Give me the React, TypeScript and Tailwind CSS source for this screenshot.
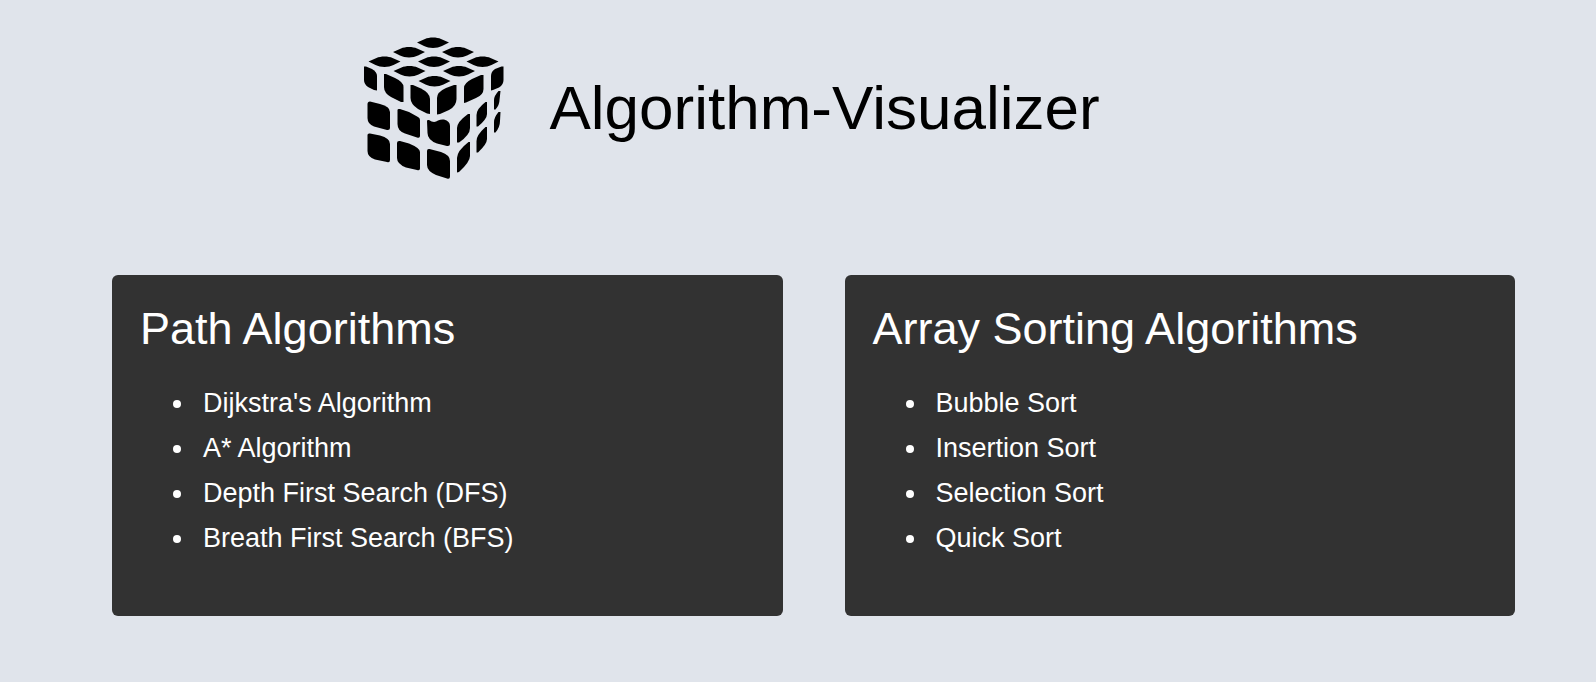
const topTiles: [number, number][] = [
  [78, 12.5], [54, 22], [103, 22], [29.5, 31.5], [79, 31.5], [127.5, 31.5], [54.5, 41], [104, 41], [79.5, 51],
];

const sideTiles = [
  "M9 36.5 L11 36.5 L17 39 Q22 42 22 46 V60.5 L19 60 L13 57 Q9 54 9 50 Z",
  "M29 44 H31 L40 48 Q48.5 52 48.5 57 V72 L46 72 L36 67 Q29 63 29 57 Z",
  "M55.5 55 H58 L66 58.5 Q75 63 75 69 V84 L72 83.5 L63 79 Q55.5 74 55.5 68 Z",
  "M101.5 55 H99 L91 58 Q82 62 82 68 V84.5 L85 84 L94 80 Q101.5 76 101.5 69 Z",
  "M128.5 45 H126 L117 49 Q109 53 109 58 V73 L111 72.5 L121 68 Q128.5 65 128.5 59 Z",
  "M148.5 36.5 H146.5 L140 39 Q136 41.5 136 46 V60.5 L138 60 L144 57.5 Q148.5 55 148.5 50 Z",
  "M12.5 74 Q12.5 71.5 15 71.5 L25 74 Q35 76.5 35 82 V98 Q35 100.5 32 100 L19 96.5 Q12.5 94 12.5 88 Z",
  "M42.5 80 Q42.5 78.5 45 79 L54 82 L63 87 Q65 88 65 90 V106 Q65 108.5 62 107.5 L50 103.5 Q42.5 101 42.5 94 Z",
  "M72 91 Q72 89.5 74 90 Q79 93.5 83 90.5 Q86 89 89 89.5 Q95 91 95 96 V114 Q95 116.5 92 116 L82 113.5 Q72.5 110 72.5 103 Z",
  "M115 84 L113 84 Q102 92 102 98 V112.5 L104 112.5 Q115 105 115 98 Z",
  "M132 72 H130.5 Q121.5 79 121.5 85 V96.5 H123 Q132 89 132 84 Z",
  "M145.5 61 H143.5 Q139 66 139 70 V79.5 H140.5 Q144.5 75 144.5 70 Z",
  "M12.5 105 Q12.5 103 15 103.5 L25 105.5 Q35 108 35 114 V130 Q35 133 32 132 L20 129.5 Q12.5 127 12.5 121 Z",
  "M42 113 Q42 110.5 45 111 L54 113.5 Q65 118 65 122 V138.5 Q65 141 62 140 L51 137.5 Q42 134 42 128 Z",
  "M72 121 Q72 118.5 74.5 119 L86 122 Q95 125 95 131 V146.5 Q95 149.5 92 148.5 L81 145 Q72 141 72 135 Z",
  "M115 112 H113.5 Q102 121 102 128 V142.5 L104 142 Q115 132 115 126 Z",
  "M132 97 H130.5 Q121.5 105 121.5 111 V122.5 H123 Q132 114 132 109 Z",
  "M145.5 82 H143.5 Q139 87.5 139 92 V102.5 H140.5 Q145 97 145 91 Z",
];

function CubeLogo() {
  return (
    <svg viewBox="0 2 160 152" className="h-[152px] w-40 shrink-0" aria-hidden="true">
      {topTiles.map(([x, y]) => (
        <path
          key={`${x}-${y}`}
          transform={`translate(${x} ${y})`}
          d="M-16 0 L-8 -3.5 C-4 -5.5 4 -5.5 8 -3.5 L16 0 L9 3.5 C4 6 -4 6 -9 3.5 Z"
        />
      ))}
      {sideTiles.map((d) => (
        <path key={d} d={d} />
      ))}
    </svg>
  );
}

const groups = [
  {
    title: "Path Algorithms",
    items: ["Dijkstra's Algorithm", "A* Algorithm", "Depth First Search (DFS)", "Breath First Search (BFS)"],
  },
  {
    title: "Array Sorting Algorithms",
    items: ["Bubble Sort", "Insertion Sort", "Selection Sort", "Quick Sort"],
  },
];

export default function App() {
  return (
    <div className="min-h-screen bg-[#e0e4eb] pt-8 pr-[81px] pb-16 pl-28 font-['Liberation_Sans',Arial,sans-serif]">
      <header className="flex items-center justify-center gap-[34px] pr-[172px]">
        <CubeLogo />
        <h1 className="text-[62px] leading-[72px] text-black">Algorithm-Visualizer</h1>
      </header>
      <main className="mt-[91px] grid grid-cols-2 gap-[62px]">
        {groups.map((group) => (
          <section key={group.title} className="rounded-md bg-[#323232] px-7 pt-7 pb-[55px] text-white">
            <h2 className="text-[45px] leading-[52px]">{group.title}</h2>
            <ul className="mt-[26px] list-disc pl-14 text-[27px] leading-[45px]">
              {group.items.map((item) => (
                <li key={item} className="pl-[7px]">
                  {item}
                </li>
              ))}
            </ul>
          </section>
        ))}
      </main>
    </div>
  );
}
